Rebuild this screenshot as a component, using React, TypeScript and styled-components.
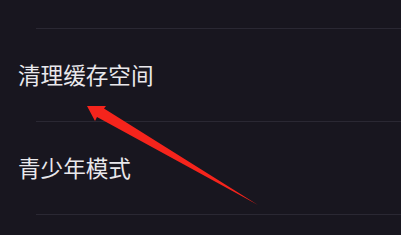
import * as React from 'react';
import styled, { createGlobalStyle } from 'styled-components';

const GlobalStyle = createGlobalStyle`
  html, body {
    margin: 0;
    padding: 0;
    background: #18161f;
  }
`;

const Page = styled.div`
  position: relative;
  width: 401px;
  height: 235px;
  overflow: hidden;
  background: #18161f;
  font-family: 'Noto Sans CJK SC', 'Noto Sans', sans-serif;
`;

const TopCut = styled.div`
  height: 28px;
`;

const Divider = styled.div`
  height: 1px;
  margin-left: 36px;
  background: #2a2833;
`;

const Row = styled.div`
  height: 92px;
  display: flex;
  align-items: center;
  padding-left: 18px;
`;

const Label = styled.span`
  color: #e9e8ec;
  font-size: 22.6px;
  line-height: 1;
`;

// red annotation arrow drawn over the list
const ArrowLayer = styled.svg`
  position: absolute;
  left: 0;
  top: 0;
  pointer-events: none;
`;

const items = ['清理缓存空间', '青少年模式'];

const App: React.FC = () => (
  <Page>
    <GlobalStyle />
    <TopCut />
    <Divider />
    {items.map((text) => (
      <React.Fragment key={text}>
        <Row>
          <Label>{text}</Label>
        </Row>
        <Divider />
      </React.Fragment>
    ))}
    <ArrowLayer width="401" height="235" viewBox="0 0 401 235">
      <polygon
        points="87,106 106,106 104,108.5 258,205 97,117 95,121"
        fill="#f5241c"
      />
    </ArrowLayer>
  </Page>
);

export default App;
